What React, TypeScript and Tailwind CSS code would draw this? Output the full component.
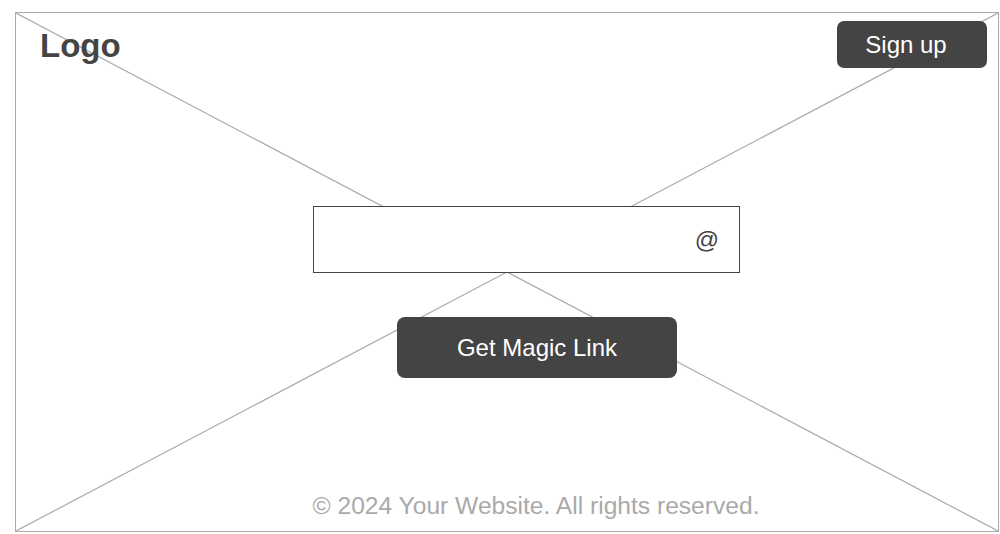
import React from 'react'

const App = () => {
  return (
    <div
      className="w-[1000px] h-[534px] bg-white pt-[12px] pl-[15px]"
      style={{ fontFamily: '"Liberation Sans", Arial, sans-serif' }}
    >
      <div className="relative w-[984px] h-[520px] border border-[#aaaaaa] flex flex-col">
        {/* placeholder image cross */}
        <svg
          className="absolute inset-0 w-full h-full"
          viewBox="0 0 100 100"
          preserveAspectRatio="none"
        >
          <line x1="0" y1="0" x2="100" y2="100" stroke="#aaaaaa" strokeWidth="1.2" vectorEffect="non-scaling-stroke" />
          <line x1="100" y1="0" x2="0" y2="100" stroke="#aaaaaa" strokeWidth="1.2" vectorEffect="non-scaling-stroke" />
        </svg>

        <header className="relative flex justify-between items-start pl-[24px] pr-[11px] pt-[8px]">
          <span className="mt-[7px] text-[33px] font-bold leading-[36px] text-[#444444]">Logo</span>
          <button className="w-[150px] h-[47px] rounded-[7px] bg-[#444444] text-white text-[24px] leading-none pr-[12px]">
            Sign up
          </button>
        </header>

        <main className="relative flex flex-col items-center w-[446px] ml-[297px] mt-[138px]">
          <div className="self-start w-[427px] h-[67px] border border-[#444444] bg-white flex items-center justify-end pr-[20px]">
            <span className="text-[24px] text-[#444444] leading-none">@</span>
          </div>
          <button className="mt-[44px] ml-[2px] w-[280px] h-[61px] rounded-[8px] bg-[#444444] text-white text-[24px] leading-none">
            Get Magic Link
          </button>
          <footer className="mt-[114px] text-[24.6px] leading-7 text-[#aaaaaa] whitespace-nowrap">
            © 2024 Your Website. All rights reserved.
          </footer>
        </main>
      </div>
    </div>
  )
}

export default App
